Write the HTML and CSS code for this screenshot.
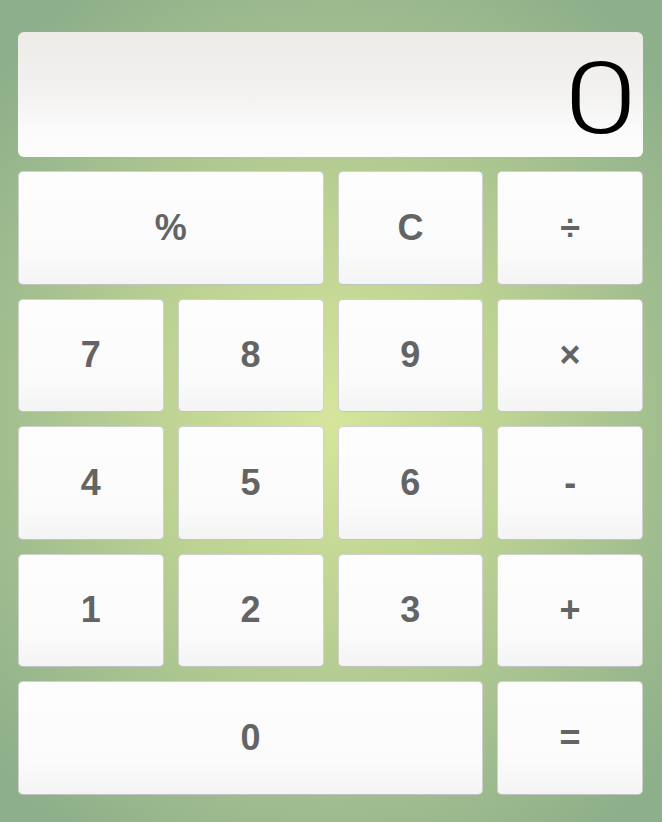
FILE: index.html
```html
<!DOCTYPE html>
<html>
<head>
<meta charset="utf-8">
<link rel="stylesheet" href="styles.css">
</head>
<body>
<div class="calc">
  <div class="display"><span class="value">0</span></div>
  <div class="keys">
    <button class="key wide">%</button>
    <button class="key">C</button>
    <button class="key">÷</button>
    <button class="key">7</button>
    <button class="key">8</button>
    <button class="key">9</button>
    <button class="key">×</button>
    <button class="key">4</button>
    <button class="key">5</button>
    <button class="key">6</button>
    <button class="key">-</button>
    <button class="key">1</button>
    <button class="key">2</button>
    <button class="key">3</button>
    <button class="key">+</button>
    <button class="key triple">0</button>
    <button class="key">=</button>
  </div>
</div>
</body>
</html>
```
FILE: styles.css
```css
html, body {
  margin: 0;
  padding: 0;
  height: 100%;
}
body {
  background: radial-gradient(ellipse 68% 62% at 50% 51%, #d5e59b 0%, #bcd293 40%, #a0bd8f 75%, #8daf8a 100%);
  font-family: "Liberation Sans", Arial, sans-serif;
  overflow: hidden;
}
.calc {
  padding: 32px 19px 0 18px;
  display: flex;
  flex-direction: column;
  gap: 14.5px;
}
.display {
  height: 124.5px;
  border-radius: 6px;
  background: linear-gradient(to bottom, #eeebe8 0%, #f3f2f0 50%, #fbfbfb 80%, #fcfcfc 100%);
  display: flex;
  align-items: center;
  justify-content: flex-end;
  padding-right: 6px;
  box-sizing: border-box;
}
.value {
  font-family: "Roboto", "Liberation Sans", sans-serif;
  font-size: 101px;
  font-weight: 300;
  color: #000;
  line-height: 1;
  display: inline-block;
  transform: scaleX(1.3);
  transform-origin: right center;
  margin-top: 8px;
}
.keys {
  display: grid;
  grid-template-columns: repeat(4, 1fr);
  grid-auto-rows: 113.5px;
  column-gap: 14px;
  row-gap: 14px;
}
.key {
  margin: 0;
  border: 1px solid #d0d0d0;
  border-bottom-color: #c2c2c2;
  border-radius: 5px;
  background: linear-gradient(to bottom, #fdfdfd 0%, #fbfbfb 70%, #f4f4f4 100%);
  font-family: "Liberation Sans", Arial, sans-serif;
  font-weight: bold;
  font-size: 36px;
  color: #646464;
  padding: 0;
}
.wide {
  grid-column: span 2;
}
.triple {
  grid-column: span 3;
}
```
